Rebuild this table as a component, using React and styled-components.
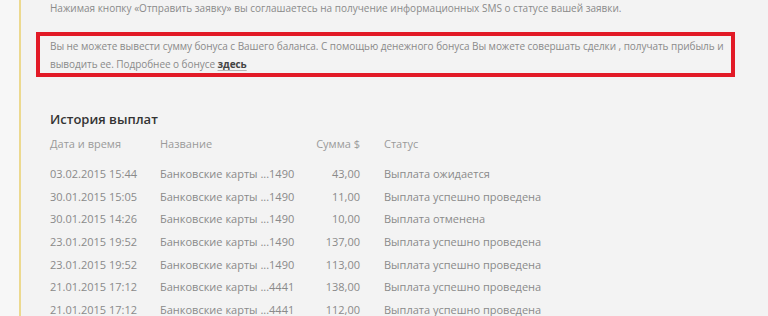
import React from "react";
import styled, { createGlobalStyle } from "styled-components";

const Global = createGlobalStyle`
  html, body { margin: 0; padding: 0; background: #f3f3f3; }
  body { font-family: "Open Sans", "Liberation Sans", sans-serif; }
`;

const Page = styled.div`
  display: flex;
  width: 768px;
  height: 316px;
  overflow: hidden;
  background: #f3f3f3;
`;

const Gutter = styled.div`
  width: 19px;
  flex: none;
  background: #f7f7f7;
  border-right: 2px solid #ecd98f;
`;

const Content = styled.div`
  flex: 1;
  padding: 0 0 0 15px;
`;

const Notice = styled.p`
  margin: 0;
  padding: 0 0 0 14px;
  font-size: 10px;
  line-height: 16px;
  color: #8a8a8a;
`;

const Alert = styled.div`
  margin: 16px 0 0 0;
  width: 681px;
  border: 4px solid #e21a26;
  padding: 1px 0 0 10px;
  font-size: 10px;
  line-height: 18px;
  letter-spacing: -0.05px;
  color: #8a8a8a;
`;

const Link = styled.a`
  color: #444;
  font-weight: 700;
  text-decoration: underline;
  text-decoration-color: #b5b5b5;
  text-underline-offset: 2px;
`;

const Section = styled.section`
  padding: 32px 0 0 14px;
`;

const Title = styled.h2`
  margin: 0 0 2px 0;
  font-size: 13px;
  line-height: 20px;
  font-weight: 600;
  color: #333;
`;

const Row = styled.div`
  display: grid;
  grid-template-columns: 110px 150px 50px 1fr;
  align-items: center;
  height: ${(p) => (p.$head ? "24px" : "22.7px")};
  margin-bottom: ${(p) => (p.$head ? "7px" : "0")};
  font-size: 11px;
  color: ${(p) => (p.$head ? "#9a9a9a" : "#8a8a8a")};
  white-space: nowrap;
`;

const Cell = styled.div`
  text-align: ${(p) => (p.$right ? "right" : "left")};
  padding-left: ${(p) => (p.$status ? "24px" : "0")};
`;

const rows = [
  ["03.02.2015 15:44", "Банковские карты ...1490", "43,00", "Выплата ожидается"],
  ["30.01.2015 15:05", "Банковские карты ...1490", "11,00", "Выплата успешно проведена"],
  ["30.01.2015 14:26", "Банковские карты ...1490", "10,00", "Выплата отменена"],
  ["23.01.2015 19:52", "Банковские карты ...1490", "137,00", "Выплата успешно проведена"],
  ["23.01.2015 19:52", "Банковские карты ...1490", "113,00", "Выплата успешно проведена"],
  ["21.01.2015 17:12", "Банковские карты ...4441", "138,00", "Выплата успешно проведена"],
  ["21.01.2015 17:12", "Банковские карты ...4441", "112,00", "Выплата успешно проведена"],
];

export default function App() {
  return (
    <>
      <Global />
      <Page>
        <Gutter />
        <Content>
          <Notice>
            Нажимая кнопку «Отправить заявку» вы соглашаетесь на получение информационных SMS о статусе вашей заявки.
          </Notice>
          <Alert>
            Вы не можете вывести сумму бонуса с Вашего баланса. С помощью денежного бонуса Вы можете совершать сделки , получать прибыль и выводить ее. Подробнее о бонусе <Link href="#">здесь</Link>
          </Alert>
          <Section>
            <Title>История выплат</Title>
            <Row $head>
              <Cell>Дата и время</Cell>
              <Cell>Название</Cell>
              <Cell $right>Сумма $</Cell>
              <Cell $status>Статус</Cell>
            </Row>
            {rows.map((r, i) => (
              <Row key={i}>
                <Cell>{r[0]}</Cell>
                <Cell>{r[1]}</Cell>
                <Cell $right>{r[2]}</Cell>
                <Cell $status>{r[3]}</Cell>
              </Row>
            ))}
          </Section>
        </Content>
      </Page>
    </>
  );
}
